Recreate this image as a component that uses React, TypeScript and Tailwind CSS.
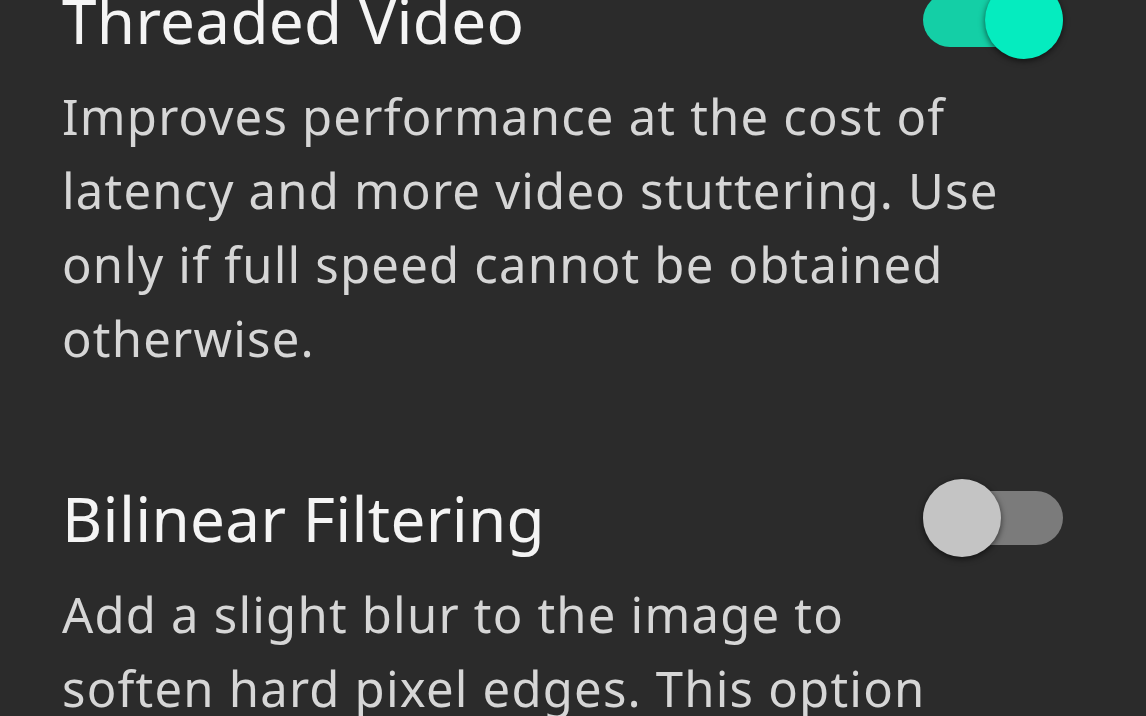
import React from 'react';

const Toggle: React.FC<{ on: boolean }> = ({ on }) => (
  <div className="relative w-[140px] h-[78px] flex items-center shrink-0">
    <div className={`w-full h-[54px] rounded-full ${on ? 'bg-[#14cfa6]' : 'bg-[#7b7b7b]'}`} />
    <div
      className={`absolute top-0 w-[78px] h-[78px] rounded-full shadow-[0_2px_6px_rgba(0,0,0,0.6)] ${
        on ? 'right-0 bg-[#05ecbf]' : 'left-0 bg-[#c4c4c4]'
      }`}
    />
  </div>
);

const Setting: React.FC<{ title: string; lines: string[]; on: boolean }> = ({ title, lines, on }) => (
  <div>
    <div className="flex items-center justify-between">
      <div className="text-[62px] leading-[74px] tracking-[0.3px] text-[#f4f4f4]">{title}</div>
      <Toggle on={on} />
    </div>
    <div className="mt-[20px] text-[49px] leading-[74px] tracking-[1.2px] text-[#d6d6d6]">
      {lines.map((l) => (
        <div key={l} className="whitespace-nowrap">{l}</div>
      ))}
    </div>
  </div>
);

export default function App() {
  return (
    <div className="w-[1146px] h-[716px] overflow-hidden bg-[#2b2b2b] font-['Noto_Sans',sans-serif]">
      <div className="-mt-[19px] pl-[62px] pr-[83px] flex flex-col gap-[104px]">
        <Setting
          title="Threaded Video"
          on
          lines={[
            'Improves performance at the cost of',
            'latency and more video stuttering. Use',
            'only if full speed cannot be obtained',
            'otherwise.',
          ]}
        />
        <Setting
          title="Bilinear Filtering"
          on={false}
          lines={[
            'Add a slight blur to the image to',
            'soften hard pixel edges. This option',
            'has very little impact on performance.',
          ]}
        />
      </div>
    </div>
  );
}
